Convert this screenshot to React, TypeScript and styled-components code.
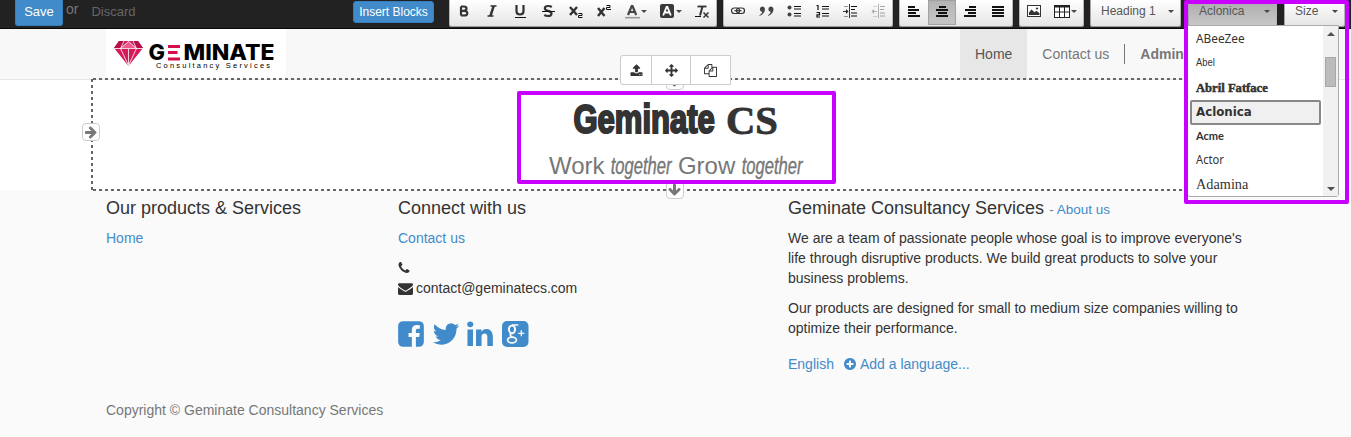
import React from "react";
import styled, { createGlobalStyle, css } from "styled-components";

const Global = createGlobalStyle`
  * { box-sizing: border-box; }
  html, body { margin: 0; padding: 0; }
  body {
    font-family: "Liberation Sans", Arial, sans-serif;
    font-size: 14px;
    line-height: 20px;
    color: #333;
    background: #fafafa;
    overflow: hidden;
  }
  h1, h2, h4, p { margin: 0; font-weight: normal; }
`;

const Page = styled.div`
  position: relative;
  width: 1351px;
  height: 437px;
  overflow: hidden;
`;

/* ---------- editor bar ---------- */

const EditorBar = styled.header`
  display: flex;
  align-items: flex-start;
  height: 29px;
  background: #222;
  border-bottom: 1px solid #080808;
`;

const EditorActions = styled.div`
  display: flex;
  align-items: flex-start;
  width: 449px;
  padding: 0 15px;
  font-size: 13px;
  line-height: 24px;
  color: #666;
`;

const SaveButton = styled.button`
  width: 48px;
  height: 26px;
  padding: 0 0 2px;
  border: 1px solid #357ebd;
  border-top: 0;
  border-radius: 0 0 3px 3px;
  background: #428bca;
  color: #fff;
  font: 13px/22px "Liberation Sans", sans-serif;
`;

const Or = styled.span`
  margin-left: 3px;
  font-size: 14px;
  line-height: 18px;
  color: #777;
`;

const Discard = styled.span`
  margin-left: 13px;
`;

const InsertButton = styled.button`
  width: 81px;
  height: 22px;
  margin: 1px 0 0 auto;
  padding: 0;
  border: 1px solid #357ebd;
  border-radius: 3px;
  background: #428bca;
  color: #fff;
  font: 12px/20px "Liberation Sans", sans-serif;
  white-space: nowrap;
`;

const Tools = styled.div`
  display: flex;
  gap: 6px;
`;

const ToolGroup = styled.div`
  display: flex;
  height: 27px;
  padding: 0 1px 2px;
  border-radius: 0 0 3px 3px;
  background: linear-gradient(#fff, #e4e4e4);
  box-shadow: inset 0 -1px 0 #979797, inset 1px 0 0 #b6b6b6, inset -1px 0 0 #b6b6b6;
`;

const ToolButton = styled.span<{ $active?: boolean; $wide?: boolean; $dim?: boolean }>`
  display: flex;
  align-items: flex-start;
  width: ${(p) => (p.$wide ? 35 : 28)}px;
  padding: 3px 0 0 6px;
  ${(p) =>
    p.$active &&
    css`
      background: linear-gradient(#b4b4b4, #c6c6c6);
      box-shadow: inset 0 0 1px 1px #a0a0a0;
    `}
  svg {
    flex: none;
    opacity: ${(p) => (p.$dim ? 0.35 : 1)};
  }
`;

const Caret = styled.i`
  width: 0;
  height: 0;
  margin: 7px 0 0 1px;
  border: 3px solid transparent;
  border-top-color: #474747;
  border-bottom: 0;
`;

const Combo = styled.div<{ $w: number; $active?: boolean }>`
  display: flex;
  justify-content: space-between;
  width: ${(p) => p.$w}px;
  height: 27px;
  margin-right: 1px;
  padding: 0 7px 0 11px;
  border-radius: 0 0 3px 3px;
  background: ${(p) =>
    p.$active ? "linear-gradient(#aaa, #cacaca)" : "linear-gradient(#fff, #e4e4e4)"};
  box-shadow: inset 0 -1px 0 #979797, inset 1px 0 0 #a6a6a6, inset -1px 0 0 #b6b6b6;
  color: #565656;
  font-size: 12px;
  line-height: 23px;
  white-space: nowrap;
  ${Caret} { margin-top: 10px; }
`;

/* ---------- site header ---------- */

const Navbar = styled.nav`
  display: flex;
  height: 51px;
  padding-left: 106px;
  background: #f8f8f8;
  border-bottom: 1px solid #e7e7e7;
`;

const LogoBox = styled.div`
  width: 180px;
  height: 50px;
  background: #fff;
`;

const NavLinks = styled.div`
  display: flex;
  align-items: center;
  margin-left: 674px;
  color: #777;
`;

const NavItem = styled.a<{ $current?: boolean }>`
  height: 50px;
  padding: 0 15px;
  line-height: 50px;
  white-space: nowrap;
  background: ${(p) => (p.$current ? "#e7e7e7" : "transparent")};
  color: ${(p) => (p.$current ? "#555" : "#777")};
`;

const NavDivider = styled.i`
  width: 1px;
  height: 20px;
  background: #777;
`;

/* ---------- title block ---------- */

const Stage = styled.main`
  height: 110px;
  padding-left: 91px;
  background: #fff;
`;

const TitleBlock = styled.section`
  position: relative;
  width: 1169px;
  height: 113px;
  top: -2px;
  padding-top: 21px;
  text-align: center;
  background:
    repeating-linear-gradient(90deg, transparent 0 2px, #666 2px 5px, transparent 5px 6px) 0 0 / 100% 2px no-repeat,
    repeating-linear-gradient(90deg, transparent 0 2px, #666 2px 5px, transparent 5px 6px) 0 100% / 100% 2px no-repeat,
    repeating-linear-gradient(transparent 0 1px, #666 1px 4px, transparent 4px 6px) 0 0 / 2px 100% no-repeat;
`;

const Title = styled.h1`
  display: flex;
  justify-content: center;
  gap: 5px;
  height: 40px;
  padding-left: 5px;
  line-height: 40px;
  color: #333;
`;

const Fitted = styled.span<{ $w: number }>`
  display: inline-flex;
  justify-content: center;
  width: ${(p) => p.$w}px;
  white-space: nowrap;
`;

const Poster = styled.span`
  font: bold 40px/40px "Liberation Sans Narrow", "Liberation Sans", sans-serif;
  -webkit-text-stroke: 2.2px #333;
  transform: scaleX(0.775);
`;

const Flared = styled.span`
  font: bold 39px/43px "Liberation Serif", serif;
  -webkit-text-stroke: 0.8px #333;
  transform: scaleX(1.04);
`;

const Subtitle = styled.h2`
  display: flex;
  justify-content: center;
  margin-top: 12px;
  font-size: 24px;
  line-height: 30px;
  color: #777;
  white-space: pre;
`;

const Script = styled.span`
  font: italic 24px/30px "Liberation Sans Narrow", "Liberation Sans", sans-serif;
  -webkit-text-stroke: 0.4px #777;
  transform: scaleX(0.69);
`;

const Handle = styled.span<{ $x: number; $y: number }>`
  position: absolute;
  left: ${(p) => p.$x}px;
  top: ${(p) => p.$y}px;
  display: flex;
  align-items: center;
  justify-content: center;
  width: 18px;
  height: 18px;
  border: 1px solid #ccc;
  border-radius: 4px;
  background: #fff;
  color: #777;
`;

const BlockActions = styled.div`
  position: absolute;
  left: 620px;
  top: 55px;
  display: flex;
  width: 111px;
  height: 30px;
  border: 1px solid #ccc;
  border-radius: 3px 0 0 3px;
  background: #fff;
`;

const BlockAction = styled.span<{ $w: number }>`
  display: flex;
  align-items: center;
  justify-content: center;
  width: ${(p) => p.$w}px;
  & + & { border-left: 1px solid #ccc; }
`;

const Highlight = styled.div<{ $x: number; $y: number; $w: number; $h: number }>`
  position: absolute;
  left: ${(p) => p.$x}px;
  top: ${(p) => p.$y}px;
  width: ${(p) => p.$w}px;
  height: ${(p) => p.$h}px;
  border: 4px solid #c800ff;
  border-radius: 2px;
`;

/* ---------- font menu ---------- */

const FontMenu = styled.div`
  position: absolute;
  left: 1187px;
  top: 25px;
  display: flex;
  width: 152px;
  height: 172px;
  border: 1px solid #aaa;
  border-radius: 0 0 3px 3px;
  background: #fff;
`;

const FontList = styled.div`
  flex: 1;
  padding: 1px 2px 0;
`;

const FontItem = styled.div<{
  $font: string;
  $scale: number;
  $selected?: boolean;
  $height?: number;
  $lift?: number;
  $stroke?: number;
}>`
  display: flex;
  align-items: center;
  height: ${(p) => p.$height ?? 24}px;
  padding: 0 0 ${(p) => p.$lift ?? 0}px ${(p) => (p.$selected ? 4 : 6)}px;
  font: ${(p) => p.$font};
  color: #333;
  white-space: nowrap;
  ${(p) =>
    p.$selected &&
    css`
      border: 2px solid #888;
      border-radius: 2px;
      background: #f0f0f0;
    `}
  span {
    display: inline-block;
    transform-origin: 0 50%;
    transform: scaleX(${(p) => p.$scale});
    -webkit-text-stroke: ${(p) => p.$stroke ?? 0}px #333;
  }
`;

const Scrollbar = styled.div`
  display: flex;
  flex-direction: column;
  align-items: center;
  width: 15px;
  padding: 6px 0 5px;
  background: #f1f1f1;
`;

const ScrollArrow = styled.i<{ $down?: boolean }>`
  border: 4px solid transparent;
  ${(p) =>
    p.$down
      ? "border-top-color:#505050;border-bottom:0;margin-top:auto;"
      : "border-bottom-color:#505050;border-top:0;"}
`;

const Thumb = styled.i`
  width: 11px;
  height: 30px;
  margin-top: 21px;
  border: 1px solid #a8a8a8;
  background: #bcbcbc;
`;

/* ---------- footer ---------- */

const Footer = styled.footer`
  padding: 8px 0 0 106px;
`;

const Columns = styled.div`
  display: grid;
  grid-template-columns: 292px 390px 470px;
  height: 202px;
`;

const Heading = styled.h4`
  height: 20px;
  margin-bottom: 10px;
  font-size: 18px;
  line-height: 20px;
  small { font-size: 13.5px; color: #777; }
`;

const Link = styled.a`
  color: #428bca;
`;

const Para = styled.p`
  margin-bottom: 10px;
`;

const ContactLine = styled.div`
  display: flex;
  align-items: center;
  gap: 3px;
  height: 20px;
`;

const PhoneLine = styled(ContactLine)`
  margin-left: -1px;
`;

const Social = styled.div`
  display: flex;
  gap: 4.7px;
  margin: 21px 0 0 -2px;
  color: #428bca;
`;

const Languages = styled.div`
  display: flex;
  align-items: center;
  margin-top: 16px;
  color: #428bca;
  svg { margin: 0 3px 0 9px; }
`;

const Copyright = styled.p`
  color: #777;
`;

/* ---------- icons ---------- */

const glyphs = {
  facebook:
    "M1376 128q119 0 203.5 84.5t84.5 203.5v960q0 119-84.5 203.5t-203.5 84.5h-188v-595h199l30-232h-229v-148q0-56 23.5-84t91.5-28l122-1v-207q-63-9-178-9-136 0-217.5 80t-81.5 226v171h-200v232h200v595h-532q-119 0-203.5-84.5t-84.5-203.5v-960q0-119 84.5-203.5t203.5-84.5h960z",
  twitter:
    "M1684 408q-67 98-162 167 1 14 1 42 0 130-38 259.5t-115.5 248.5-184.5 210.5-258 146-323 54.5q-271 0-496-145 35 4 78 4 225 0 401-138-105-2-188-64.5t-114-159.5q33 5 61 5 43 0 85-11-112-23-185.5-111.5t-73.5-205.5v-4q68 38 146 41-66-44-105-115t-39-154q0-88 44-163 121 149 294.5 238.5t371.5 99.5q-8-38-8-74 0-134 94.5-228.5t228.5-94.5q140 0 236 102 109-21 205-78-37 115-142 178 93-10 186-50z",
  linkedin:
    "M477 625v991h-330v-991h330zm21-306q1 73-50.5 122t-135.5 49h-2q-82 0-132-49t-50-122q0-74 51.5-122.5t134.5-48.5 133 48.5 51 122.5zm1166 729v568h-329v-530q0-105-40.5-164.5t-126.5-59.5q-63 0-105.5 34.5t-63.5 85.5q-11 30-11 81v553h-329q2-399 2-647t-1-296l-1-48h329v144h-2q20-32 41-56t56.5-52 87-43.5 114.5-15.5q171 0 275 113.5t104 332.5z",
  phone:
    "M1600 1240q0 27-10 70.5t-21 68.5q-21 50-122 106-94 51-186 51-27 0-53-3.5t-57.5-12.5-47-14.5-55.5-20.5-49-18q-98-35-175-83-127-79-264-216t-216-264q-48-77-83-175-3-9-18-49t-20.5-55.5-14.5-47-12.5-57.5-3.5-53q0-92 51-186 56-101 106-122 25-11 68.5-21t70.5-10q14 0 21 3 18 6 53 76 11 19 30 54t35 63.5 31 53.5q3 4 17.5 25t21.5 35.5 7 28.5q0 20-28.5 50t-62 55-62 53-28.5 46q0 9 5 22.5t8.5 20.5 14 24 11.5 19q76 137 174 235t235 174q2 1 19 11.5t24 14 20.5 8.5 22.5 5q18 0 46-28.5t53-62 55-62 50-28.5q14 0 28.5 7t35.5 21.5 25 17.5q25 15 53.5 31t63.5 35 54 30q70 35 76 53 3 7 3 21z",
  envelope:
    "M1792 710v794q0 66-47 113t-113 47h-1472q-66 0-113-47t-47-113v-794q44 49 101 87 362 246 497 345 57 42 92.5 65.5t94.5 48 110 24.5h2q51 0 110-24.5t94.5-48 92.5-65.5q170-123 498-345 57-39 100-87zm0-294q0 79-49 151t-122 123q-376 261-468 325-10 7-42.5 31t-54 38.5-52 32.5-57.5 27-50 9h-2q-23 0-50-9t-57.5-27-52-32.5-54-38.5-42.5-31q-91-64-262-182.5t-205-142.5q-62-42-117-115.5t-55-136.5q0-78 41.5-130t118.5-52h1472q65 0 112.5 47t47.5 113z",
  plus:
    "M1344 960v-128q0-26-19-45t-45-19h-256v-256q0-26-19-45t-45-19h-128q-26 0-45 19t-19 45v256h-256q-26 0-45 19t-19 45v128q0 26 19 45t45 19h256v256q0 26 19 45t45 19h128q26 0 45-19t19-45v-256h256q26 0 45-19t19-45zm320-64q0 209-103 385.5t-279.5 279.5-385.5 103-385.5-103-279.5-279.5-103-385.5 103-385.5 279.5-279.5 385.5-103 385.5 103 279.5 279.5 103 385.5z",
  move:
    "M1792 896q0 26-19 45l-256 256q-19 19-45 19t-45-19-19-45v-128h-384v384h128q26 0 45 19t19 45-19 45l-256 256q-19 19-45 19t-45-19l-256-256q-19-19-19-45t19-45 45-19h128v-384h-384v128q0 26-19 45t-45 19-45-19l-256-256q-19-19-19-45t19-45l256-256q19-19 45-19t45 19 19 45v128h384v-384h-128q-26 0-45-19t-19-45 19-45l256-256q19-19 45-19t45 19l256 256q19 19 19 45t-19 45-45 19h-128v384h384v-128q0-26 19-45t45-19 45 19l256 256q19 19 19 45z",
  upload:
    "M1344 1472q0-26-19-45t-45-19-45 19-19 45 19 45 45 19 45-19 19-45zm256 0q0-26-19-45t-45-19-45 19-19 45 19 45 45 19 45-19 19-45zm128-224v320q0 40-28 68t-68 28h-1472q-40 0-68-28t-28-68v-320q0-40 28-68t68-28h427q21 56 70.5 92t110.5 36h256q61 0 110.5-36t70.5-92h427q40 0 68 28t28 68zm-325-648q-17 40-59 40h-256v448q0 26-19 45t-45 19h-256q-26 0-45-19t-19-45v-448h-256q-42 0-59-40-17-39 14-69l448-448q18-19 45-19t45 19l448 448q31 30 14 69z",
  files:
    "M1696 384q40 0 68 28t28 68v1216q0 40-28 68t-68 28h-960q-40 0-68-28t-28-68v-288h-544q-40 0-68-28t-28-68v-672q0-40 20-88t48-76l408-408q28-28 76-48t88-20h416q40 0 68 28t28 68v328q68-40 128-40h416zm-544 213l-299 299h299v-299zm-640-384l-299 299h299v-299zm196 647l316-316v-416h-384v416q0 40-28 68t-68 28h-416v640h512v-256q0-40 20-88t48-76zm956 804v-1152h-384v416q0 40-28 68t-68 28h-416v640h896z",
  arrow:
    "M1600 960q0 54-37 91l-651 651q-39 37-91 37-51 0-90-37l-75-75q-38-38-38-91t38-91l293-293h-704q-52 0-84.5-37.5t-32.5-90.5v-128q0-53 32.5-90.5t84.5-37.5h704l-293-294q-38-36-38-90t38-90l75-75q38-38 90-38 53 0 91 38l651 651q37 35 37 90z",
};

const Glyph = ({ name, size, turn = 0 }: { name: keyof typeof glyphs; size: number; turn?: number }) => (
  <svg width={size} height={size} viewBox="0 0 1792 1792" fill="currentColor">
    <path d={glyphs[name]} transform={`rotate(${turn} 896 896)`} />
  </svg>
);

const GooglePlus = () => (
  <svg width="30" height="30" viewBox="0 0 30 30" fill="none" stroke="#fafafa">
    <rect x="2" y="2" width="26.5" height="26" rx="5" fill="#428bca" stroke="none" />
    <ellipse cx="12" cy="10.3" rx="3.1" ry="3.9" strokeWidth="2" />
    <path d="M12 6h6.300M11.200 14.500c-2 1.300-.8 2.500 1.300 3.500" strokeWidth="1.500" />
    <ellipse cx="12" cy="21" rx="4.400" ry="2.900" strokeWidth="1.700" />
    <path d="M21.300 11.300v6M18.300 14.300h6" strokeWidth="1.300" />
  </svg>
);

const Ico = ({ children }: { children: React.ReactNode }) => (
  <svg width="16" height="16" viewBox="0 0 16 16" fill="none" stroke="#333" strokeWidth="1.500">
    {children}
  </svg>
);

const lines = (rows: [number, number][]) =>
  rows.map(([x, w], i) => (
    <rect key={i} x={x} y={3 + i * 3} width={w} height={2} fill="#111" stroke="none" />
  ));

const icons = {
  bold: <path d="M5 3.500v9M5 3.500h2.800q2.700 0 2.700 2.100t-2.700 2.200H5M8 7.800q3.300 0 3.300 2.400T8 12.500H5" strokeWidth="2.200" />,
  italic: <><path d="M6.500 3h6M3.500 13h6" /><path d="M9.700 3L6.400 13" strokeWidth="2.400" /></>,
  underline: <><path d="M4.500 2v6.300q0 3.200 3.500 3.200t3.500-3.200V2" strokeWidth="2.200" /><path d="M3 14.500h11" stroke="#111" strokeWidth="1" /></>,
  strike: <><path d="M11.800 4Q10.300 3 8.300 3 4.800 3 4.800 5.300q0 1.900 3.200 2.500 3.500.7 3.500 2.600 0 2.600-3.500 2.600-2 0-3.700-1" strokeWidth="2.200" /><path d="M2 8.500h13" stroke="#111" strokeWidth="1" /></>,
  sub: <><path d="M2 4l7 8M9 4l-7 8" strokeWidth="2.400" /><path d="M10.500 10.500h3.500v2h-3.500v2h4" stroke="#111" strokeWidth="1" /></>,
  sup: <><path d="M2 5l6.500 8M8.500 5l-6.500 8" strokeWidth="2.400" /><path d="M10.500 2.500h3.500v2h-3.500v2h4.500" stroke="#111" strokeWidth="1" /></>,
  color: <><path d="M4 12L7.700 3h.8L12.200 12M5.500 9h5.200" strokeWidth="2.200" stroke="#444" /><path d="M1 14.700h15" stroke="#999" strokeWidth="1.600" /></>,
  bgcolor: <><rect x="1" y="1" width="14" height="14" rx="2" fill="#3a3a3a" stroke="none" /><path d="M4.200 12.500L7.600 4h.8l3.400 8.500M5.500 9.500h5" stroke="#fff" strokeWidth="1.800" /></>,
  clear: <><path d="M3.500 3.500h9" strokeWidth="1.800" /><path d="M8.500 3.500L6 12.500" strokeWidth="2" /><path d="M1 13.500h6" stroke="#111" strokeWidth="1" /><path d="M9.500 9.500l5 5M14.500 9.500l-5 5" strokeWidth="1.500" /></>,
  link: <><rect x="1.500" y="5" width="8" height="5.500" rx="2.700" strokeWidth="1.200" /><rect x="6.500" y="5" width="8" height="5.500" rx="2.700" strokeWidth="1.200" /><path d="M4.500 7.700h7" strokeWidth="1.200" /></>,
  quote: <g fill="#444" stroke="none"><path d="M4 3.500a2.700 2.700 0 0 1 3 2.800q0 4.700-5.500 6.700v-.8q2.500-1.400 2.700-3.200a2.800 2.800 0 0 1-.2-5.500z" /><path d="M12.500 3.500a2.700 2.700 0 0 1 3 2.800q0 4.700-5.500 6.700v-.8q2.500-1.400 2.700-3.200a2.800 2.800 0 0 1-.2-5.500z" /></g>,
  bullets: <><circle cx="3.500" cy="4.500" r="2" fill="#444" stroke="none" /><circle cx="3.500" cy="11.500" r="2" fill="#444" stroke="none" /><path d="M8 3.500h7M8 6h7M8 10.500h7M8 13h7" stroke="#111" strokeWidth="1.200" /></>,
  numbers: <><path d="M2.500 2.500H4V7M2.500 9.500h3v2.300h-2.500v2.200h3" stroke="#111" strokeWidth="1.200" /><path d="M8 3.500h7M8 6h7M8 10.500h7M8 13h7" stroke="#111" strokeWidth="1.200" /></>,
  indent: <><path d="M7.500 1v14" stroke="#333" strokeWidth="1" /><path d="M1 8.500h5" strokeWidth="1" /><path d="M4 6l2.500 2.500L4 11z" fill="#222" stroke="none" /><path d="M2.500 3.500h4M2.500 13.500h4" strokeDasharray="1 1" strokeWidth="1" /><path d="M9 3.500h6M9 6.500h4M9 10h6M9 13h6" stroke="#111" strokeWidth="1.200" /></>,
  outdent: <><path d="M8.500 1v14" stroke="#333" strokeWidth="1" /><path d="M2 8.500h5" strokeWidth="1" /><path d="M4 6L1.500 8.500 4 11z" fill="#222" stroke="none" /><path d="M3.500 3.500h4M3.500 13.500h4" strokeDasharray="1 1" strokeWidth="1" /><path d="M10 3.500h5M10 6.500h4M10 10h5M10 13h5" stroke="#111" strokeWidth="1.200" /></>,
  left: lines([[2, 7], [2, 11], [2, 8], [2, 12]]),
  center: lines([[5, 7], [2, 12], [4, 9], [2, 12]]),
  right: lines([[7, 7], [3, 11], [6, 8], [2, 12]]),
  justify: lines([[2, 12], [2, 12], [2, 12], [2, 12]]),
  image: <><rect x="1.500" y="2.500" width="13" height="11" fill="#fff" stroke="#333" strokeWidth="1" /><path d="M3 12V9.500l2.500-3 3 2.800 2-1.500 3 2.500V12z" fill="#333" stroke="none" /><circle cx="11" cy="5.500" r="1.100" fill="#333" stroke="none" /></>,
  table: <><rect x=".5" y="2.500" width="15" height="12" fill="#fff" stroke="#222" strokeWidth="1" /><path d="M.5 3.500h15" stroke="#222" strokeWidth="2" /><path d="M.5 9h15M5.500 4v10M10.500 4v10" stroke="#222" strokeWidth="1" /></>,
};

type Tool = { icon: keyof typeof icons; wide?: boolean; active?: boolean; dim?: boolean };

const toolGroups: Tool[][] = [
  [
    { icon: "bold" }, { icon: "italic" }, { icon: "underline" }, { icon: "strike" }, { icon: "sub" },
    { icon: "sup" }, { icon: "color", wide: true }, { icon: "bgcolor", wide: true }, { icon: "clear" },
  ],
  [
    { icon: "link" }, { icon: "quote" }, { icon: "bullets" }, { icon: "numbers" },
    { icon: "indent" }, { icon: "outdent", dim: true },
  ],
  [{ icon: "left" }, { icon: "center", active: true }, { icon: "right" }, { icon: "justify" }],
  [{ icon: "image" }, { icon: "table", wide: true }],
];

const Logo = () => (
  <svg width="180" height="50" viewBox="0 0 180 50">
    <path d="M13 12h19l5 7-14.500 18L8 19z" fill="#d6195a" />
    <path d="M13 12h6l-4 7H8zM32 12h-6l4 7h7z" fill="#b5104a" />
    <path d="M22.500 12l7.500 7H15z" fill="#ee5a8d" />
    <path d="M8 19.500h29M18 12l-3.500 7.500 8 17 8-17L27 12M22.500 12.500l-8 7M22.500 12.500l8 7M22.500 20v16" fill="none" stroke="#fff" strokeWidth=".8" />
    <g fontFamily="Inter, sans-serif" fontWeight="800" fontSize="21">
      <text x="42.500" y="31" textLength="16.500" lengthAdjust="spacingAndGlyphs">G</text>
      <text x="77.500" y="31" textLength="91" lengthAdjust="spacingAndGlyphs">MINATE</text>
    </g>
    <path d="M62 17.500h12M62 23.500h9.500M62 30h12" stroke="#d40f4c" strokeWidth="2.800" />
    <text x="50" y="39" fontFamily="Liberation Sans, sans-serif" fontSize="7.500" textLength="114">
      Consultancy Services
    </text>
  </svg>
);

export default function App() {
  return (
    <Page>
      <Global />
      <EditorBar>
        <EditorActions>
          <SaveButton>Save</SaveButton>
          <Or>or</Or>
          <Discard>Discard</Discard>
          <InsertButton>Insert Blocks</InsertButton>
        </EditorActions>
        <Tools>
          {toolGroups.map((group, g) => (
            <ToolGroup key={g}>
              {group.map((t) => (
                <ToolButton key={t.icon} $wide={t.wide} $active={t.active} $dim={t.dim}>
                  <Ico>{icons[t.icon]}</Ico>
                  {t.wide && <Caret />}
                </ToolButton>
              ))}
            </ToolGroup>
          ))}
          <Combo $w={91}>Heading 1<Caret /></Combo>
          <Combo $w={89} $active>Aclonica<Caret /></Combo>
          <Combo $w={61}>Size<Caret /></Combo>
        </Tools>
      </EditorBar>

      <Navbar>
        <LogoBox><Logo /></LogoBox>
        <NavLinks>
          <NavItem $current>Home</NavItem>
          <NavItem>Contact us</NavItem>
          <NavDivider />
          <NavItem><b>Admin</b></NavItem>
        </NavLinks>
      </Navbar>

      <Stage>
        <TitleBlock>
          <Title>
            <Fitted $w={142}><Poster>Geminate</Poster></Fitted>
            <Fitted $w={62}><Flared>CS</Flared></Fitted>
          </Title>
          <Subtitle>
            Work <Fitted $w={60}><Script>together</Script></Fitted> Grow{" "}
            <Fitted $w={60}><Script>together</Script></Fitted>
          </Subtitle>
        </TitleBlock>
      </Stage>

      <Footer>
        <Columns>
          <div>
            <Heading>Our products &amp; Services</Heading>
            <Link>Home</Link>
          </div>
          <div>
            <Heading>Connect with us</Heading>
            <Para><Link>Contact us</Link></Para>
            <PhoneLine><Glyph name="phone" size={14} /></PhoneLine>
            <ContactLine><Glyph name="envelope" size={15} />contact@geminatecs.com</ContactLine>
            <Social>
              <Glyph name="facebook" size={30} />
              <Glyph name="twitter" size={30} />
              <Glyph name="linkedin" size={30} />
              <GooglePlus />
            </Social>
          </div>
          <div>
            <Heading>Geminate Consultancy Services <small>- <Link>About us</Link></small></Heading>
            <Para>
              We are a team of passionate people whose goal is to improve everyone's life through
              disruptive products. We build great products to solve your business problems.
            </Para>
            <Para>
              Our products are designed for small to medium size companies willing to optimize their
              performance.
            </Para>
            <Languages>English<Glyph name="plus" size={14} />Add a language...</Languages>
          </div>
        </Columns>
        <Copyright>Copyright © Geminate Consultancy Services</Copyright>
      </Footer>

      <Handle $x={82} $y={123}><Glyph name="arrow" size={14} /></Handle>
      <Handle $x={666} $y={72}><Glyph name="arrow" size={14} turn={90} /></Handle>
      <Handle $x={666} $y={181}><Glyph name="arrow" size={14} turn={90} /></Handle>
      <BlockActions>
        <BlockAction $w={30}><Glyph name="upload" size={13} /></BlockAction>
        <BlockAction $w={39}><Glyph name="move" size={13} /></BlockAction>
        <BlockAction $w={40}><Glyph name="files" size={13} /></BlockAction>
      </BlockActions>
      <Highlight $x={517} $y={91} $w={319} $h={93} />

      <FontMenu>
        <FontList>
          <FontItem $font='13px "Noto Sans", sans-serif' $scale={0.91} $lift={3}><span>ABeeZee</span></FontItem>
          <FontItem $font='11px "Liberation Sans Narrow", "Liberation Sans", sans-serif' $scale={0.85} $lift={2}><span>Abel</span></FontItem>
          <FontItem $font='bold 13px "Liberation Serif", serif' $scale={0.97} $height={25} $stroke={0.5}><span>Abril Fatface</span></FontItem>
          <FontItem $font='bold 13px "DejaVu Sans", sans-serif' $scale={0.91} $selected $height={25} $lift={3}><span>Aclonica</span></FontItem>
          <FontItem $font='bold 12px Lato, sans-serif' $scale={0.92} $lift={3}><span>Acme</span></FontItem>
          <FontItem $font='12px "Noto Sans", sans-serif' $scale={0.93} $lift={3}><span>Actor</span></FontItem>
          <FontItem $font='14px "Liberation Serif", serif' $scale={1.02}><span>Adamina</span></FontItem>
        </FontList>
        <Scrollbar><ScrollArrow /><Thumb /><ScrollArrow $down /></Scrollbar>
      </FontMenu>
      <Highlight $x={1184} $y={0} $w={165} $h={204} />
    </Page>
  );
}
